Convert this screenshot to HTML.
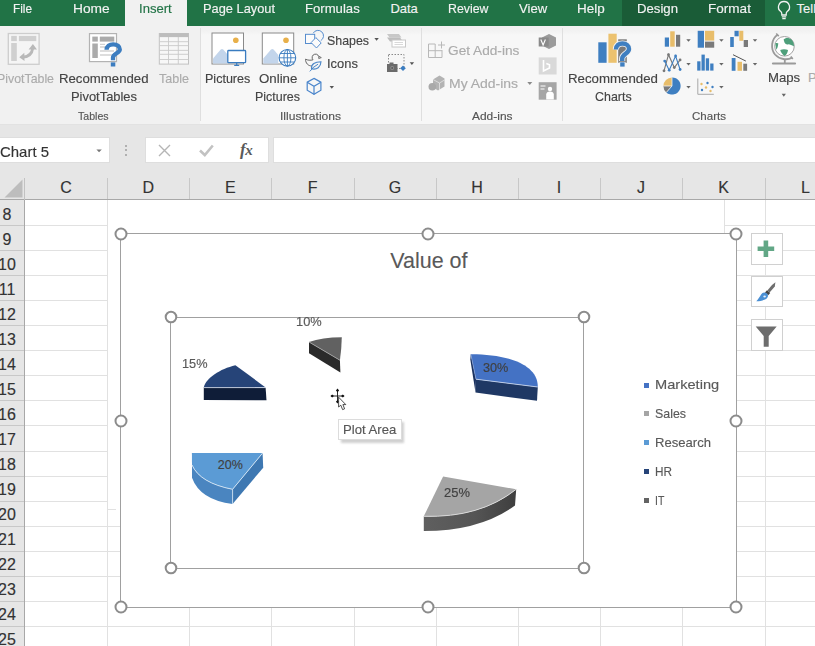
<!DOCTYPE html>
<html><head><meta charset="utf-8"><style>
html,body{margin:0;padding:0;}
body{width:815px;height:646px;overflow:hidden;position:relative;background:#fff;font-family:"Liberation Sans", sans-serif;}
</style></head><body>
<div style="position:absolute;left:0px;top:0px;width:815px;height:25.5px;background:#217346"></div>
<div style="position:absolute;left:622px;top:0px;width:143px;height:25.5px;background:#1a5c37"></div>
<div style="position:absolute;left:125px;top:0px;width:62px;height:26px;background:#f1f1f1"></div>
<svg style="position:absolute;left:774.5px;top:-0.5px" width="18" height="20" viewBox="0 0 18 20"><path d="M9 1.5a5.5 5.5 0 0 0-3.2 10c.7.6 1 1.3 1 2.2v1.3h4.4v-1.3c0-.9.3-1.6 1-2.2A5.5 5.5 0 0 0 9 1.5z" fill="none" stroke="#f2f2f2" stroke-width="1.3"/><path d="M6.8 16.8h4.4M7.3 18.6h3.4" stroke="#f2f2f2" stroke-width="1.2"/></svg>
<div style="position:absolute;left:0px;top:25.5px;width:815px;height:99.5px;background:linear-gradient(#f1f1f1 0px,#f2f2f2 5px,#f7f7f7 9px,#f7f7f7 100%)"></div>
<div style="position:absolute;left:0px;top:25.5px;width:199.5px;height:99.5px;background:#f1f1f1"></div>
<div style="position:absolute;left:0px;top:124px;width:815px;height:1px;background:#e2e2e2"></div>
<div style="position:absolute;left:199.5px;top:27.5px;width:1px;height:93px;background:#dfdfdf"></div>
<div style="position:absolute;left:421px;top:27.5px;width:1px;height:93px;background:#dfdfdf"></div>
<div style="position:absolute;left:562px;top:27.5px;width:1px;height:93px;background:#dfdfdf"></div>
<div style="position:absolute;left:0px;top:125px;width:815px;height:75px;background:#e6e6e6"></div>
<div style="position:absolute;left:-2px;top:137.3px;width:112px;height:26px;background:#fff;border:1px solid #dedede;box-sizing:border-box"></div>
<svg style="position:absolute;left:96px;top:149px" width="7" height="4"><path d="M0.4 0.4h5.4l-2.7 2.8z" fill="#777"/></svg>
<div style="position:absolute;left:125.3px;top:145px;width:2px;height:2px;background:#b0b0b0"></div>
<div style="position:absolute;left:125.3px;top:149.3px;width:2px;height:2px;background:#b0b0b0"></div>
<div style="position:absolute;left:125.3px;top:153.6px;width:2px;height:2px;background:#b0b0b0"></div>
<div style="position:absolute;left:144.5px;top:137.3px;width:124px;height:26px;background:#fff;border:1px solid #dedede;box-sizing:border-box"></div>
<div style="position:absolute;left:273px;top:137.3px;width:545px;height:26px;background:#fff;border:1px solid #dedede;box-sizing:border-box"></div>
<svg style="position:absolute;left:157px;top:143px" width="16" height="16"><path d="M2 2l11 11M13 2L2 13" stroke="#b5b5b5" stroke-width="1.4"/></svg>
<svg style="position:absolute;left:198px;top:142px" width="18" height="16"><path d="M2 8.5l4.8 4.5L14.8 3.5" fill="none" stroke="#c2c2c2" stroke-width="2.6"/></svg>
<div style="position:absolute;left:240px;top:139.5px;font-family:'Liberation Serif',serif;font-style:italic;font-weight:bold;font-size:17px;color:#5a5a5a;line-height:20px;letter-spacing:-0.5px">f<span style="font-size:15px">x</span></div>
<div style="position:absolute;left:0px;top:199px;width:815px;height:1.2px;background:#a8a8a8"></div>
<div style="position:absolute;left:24px;top:178px;width:1px;height:22px;background:#c2c2c2"></div>
<div style="position:absolute;left:107.4px;top:178px;width:1px;height:21px;background:#c8c8c8"></div>
<div style="position:absolute;left:189.3px;top:178px;width:1px;height:21px;background:#c8c8c8"></div>
<div style="position:absolute;left:271.4px;top:178px;width:1px;height:21px;background:#c8c8c8"></div>
<div style="position:absolute;left:353.8px;top:178px;width:1px;height:21px;background:#c8c8c8"></div>
<div style="position:absolute;left:436.0px;top:178px;width:1px;height:21px;background:#c8c8c8"></div>
<div style="position:absolute;left:518.1px;top:178px;width:1px;height:21px;background:#c8c8c8"></div>
<div style="position:absolute;left:600.3px;top:178px;width:1px;height:21px;background:#c8c8c8"></div>
<div style="position:absolute;left:682.4px;top:178px;width:1px;height:21px;background:#c8c8c8"></div>
<div style="position:absolute;left:764.6px;top:178px;width:1px;height:21px;background:#c8c8c8"></div>
<svg style="position:absolute;left:0px;top:176px" width="25" height="24"><path d="M22.5 3.5V21.5H4.5z" fill="#bdbdbd"/></svg>
<div style="position:absolute;left:0px;top:200px;width:24.5px;height:446px;background:#e6e6e6"></div>
<div style="position:absolute;left:24px;top:200px;width:1px;height:446px;background:#a8a8a8"></div>
<div style="position:absolute;left:0px;top:225.05px;width:24px;height:1px;background:#c8c8c8"></div>
<div style="position:absolute;left:0px;top:250.1px;width:24px;height:1px;background:#c8c8c8"></div>
<div style="position:absolute;left:0px;top:275.15px;width:24px;height:1px;background:#c8c8c8"></div>
<div style="position:absolute;left:0px;top:300.2px;width:24px;height:1px;background:#c8c8c8"></div>
<div style="position:absolute;left:0px;top:325.25px;width:24px;height:1px;background:#c8c8c8"></div>
<div style="position:absolute;left:0px;top:350.3px;width:24px;height:1px;background:#c8c8c8"></div>
<div style="position:absolute;left:0px;top:375.35px;width:24px;height:1px;background:#c8c8c8"></div>
<div style="position:absolute;left:0px;top:400.4px;width:24px;height:1px;background:#c8c8c8"></div>
<div style="position:absolute;left:0px;top:425.45000000000005px;width:24px;height:1px;background:#c8c8c8"></div>
<div style="position:absolute;left:0px;top:450.5px;width:24px;height:1px;background:#c8c8c8"></div>
<div style="position:absolute;left:0px;top:475.55px;width:24px;height:1px;background:#c8c8c8"></div>
<div style="position:absolute;left:0px;top:500.6px;width:24px;height:1px;background:#c8c8c8"></div>
<div style="position:absolute;left:0px;top:525.6500000000001px;width:24px;height:1px;background:#c8c8c8"></div>
<div style="position:absolute;left:0px;top:550.7px;width:24px;height:1px;background:#c8c8c8"></div>
<div style="position:absolute;left:0px;top:575.75px;width:24px;height:1px;background:#c8c8c8"></div>
<div style="position:absolute;left:0px;top:600.8px;width:24px;height:1px;background:#c8c8c8"></div>
<div style="position:absolute;left:0px;top:625.85px;width:24px;height:1px;background:#c8c8c8"></div>
<div style="position:absolute;left:25px;top:225.05px;width:82.4px;height:1px;background:#e1e1e1"></div>
<div style="position:absolute;left:25px;top:250.1px;width:82.4px;height:1px;background:#e1e1e1"></div>
<div style="position:absolute;left:25px;top:275.15px;width:82.4px;height:1px;background:#e1e1e1"></div>
<div style="position:absolute;left:25px;top:300.2px;width:82.4px;height:1px;background:#e1e1e1"></div>
<div style="position:absolute;left:25px;top:325.25px;width:82.4px;height:1px;background:#e1e1e1"></div>
<div style="position:absolute;left:25px;top:350.3px;width:82.4px;height:1px;background:#e1e1e1"></div>
<div style="position:absolute;left:25px;top:375.35px;width:82.4px;height:1px;background:#e1e1e1"></div>
<div style="position:absolute;left:25px;top:400.4px;width:82.4px;height:1px;background:#e1e1e1"></div>
<div style="position:absolute;left:25px;top:425.45000000000005px;width:82.4px;height:1px;background:#e1e1e1"></div>
<div style="position:absolute;left:25px;top:450.5px;width:82.4px;height:1px;background:#e1e1e1"></div>
<div style="position:absolute;left:25px;top:475.55px;width:82.4px;height:1px;background:#e1e1e1"></div>
<div style="position:absolute;left:25px;top:500.6px;width:82.4px;height:1px;background:#e1e1e1"></div>
<div style="position:absolute;left:25px;top:525.6500000000001px;width:82.4px;height:1px;background:#e1e1e1"></div>
<div style="position:absolute;left:25px;top:550.7px;width:82.4px;height:1px;background:#e1e1e1"></div>
<div style="position:absolute;left:25px;top:575.75px;width:82.4px;height:1px;background:#e1e1e1"></div>
<div style="position:absolute;left:25px;top:600.8px;width:82.4px;height:1px;background:#e1e1e1"></div>
<div style="position:absolute;left:25px;top:625.85px;width:82.4px;height:1px;background:#e1e1e1"></div>
<div style="position:absolute;left:724px;top:225px;width:91px;height:1px;background:#e1e1e1"></div>
<div style="position:absolute;left:736px;top:250.1px;width:79px;height:1px;background:#e1e1e1"></div>
<div style="position:absolute;left:736px;top:275.15px;width:79px;height:1px;background:#e1e1e1"></div>
<div style="position:absolute;left:736px;top:300.2px;width:79px;height:1px;background:#e1e1e1"></div>
<div style="position:absolute;left:736px;top:325.25px;width:79px;height:1px;background:#e1e1e1"></div>
<div style="position:absolute;left:736px;top:350.3px;width:79px;height:1px;background:#e1e1e1"></div>
<div style="position:absolute;left:736px;top:375.35px;width:79px;height:1px;background:#e1e1e1"></div>
<div style="position:absolute;left:736px;top:400.4px;width:79px;height:1px;background:#e1e1e1"></div>
<div style="position:absolute;left:736px;top:425.45000000000005px;width:79px;height:1px;background:#e1e1e1"></div>
<div style="position:absolute;left:736px;top:450.5px;width:79px;height:1px;background:#e1e1e1"></div>
<div style="position:absolute;left:736px;top:475.55px;width:79px;height:1px;background:#e1e1e1"></div>
<div style="position:absolute;left:736px;top:500.6px;width:79px;height:1px;background:#e1e1e1"></div>
<div style="position:absolute;left:736px;top:525.6500000000001px;width:79px;height:1px;background:#e1e1e1"></div>
<div style="position:absolute;left:736px;top:550.7px;width:79px;height:1px;background:#e1e1e1"></div>
<div style="position:absolute;left:736px;top:575.75px;width:79px;height:1px;background:#e1e1e1"></div>
<div style="position:absolute;left:736px;top:600.8px;width:79px;height:1px;background:#e1e1e1"></div>
<div style="position:absolute;left:25px;top:625.8px;width:790px;height:1px;background:#e1e1e1"></div>
<div style="position:absolute;left:107.4px;top:200px;width:1px;height:446px;background:#e1e1e1"></div>
<div style="position:absolute;left:764.6px;top:200px;width:1px;height:446px;background:#e1e1e1"></div>
<div style="position:absolute;left:724px;top:200px;width:1px;height:33px;background:#e1e1e1"></div>
<div style="position:absolute;left:189.3px;top:607px;width:1px;height:39px;background:#e1e1e1"></div>
<div style="position:absolute;left:271.4px;top:607px;width:1px;height:39px;background:#e1e1e1"></div>
<div style="position:absolute;left:353.8px;top:607px;width:1px;height:39px;background:#e1e1e1"></div>
<div style="position:absolute;left:436.0px;top:607px;width:1px;height:39px;background:#e1e1e1"></div>
<div style="position:absolute;left:518.1px;top:607px;width:1px;height:39px;background:#e1e1e1"></div>
<div style="position:absolute;left:600.3px;top:607px;width:1px;height:39px;background:#e1e1e1"></div>
<div style="position:absolute;left:682.4px;top:607px;width:1px;height:39px;background:#e1e1e1"></div>
<div style="position:absolute;left:108px;top:509px;width:8px;height:1px;background:#e1e1e1"></div>
<div style="position:absolute;left:108px;top:525.6px;width:12px;height:1px;background:#e1e1e1"></div>
<div style="position:absolute;left:108px;top:550.7px;width:12px;height:1px;background:#e1e1e1"></div>
<div style="position:absolute;left:108px;top:575.8px;width:12px;height:1px;background:#e1e1e1"></div>
<div style="position:absolute;left:120.5px;top:233px;width:616px;height:1.1px;background:#a0a0a0"></div>
<div style="position:absolute;left:120.5px;top:606.7px;width:616px;height:1.1px;background:#a0a0a0"></div>
<div style="position:absolute;left:120.1px;top:233px;width:1.1px;height:374px;background:#a0a0a0"></div>
<div style="position:absolute;left:735.8px;top:233px;width:1.1px;height:374px;background:#a0a0a0"></div>
<div style="position:absolute;left:170.7px;top:316.5px;width:413px;height:1.1px;background:#a0a0a0"></div>
<div style="position:absolute;left:170.7px;top:567.8px;width:413px;height:1.1px;background:#a0a0a0"></div>
<div style="position:absolute;left:170.3px;top:317px;width:1.1px;height:251px;background:#a0a0a0"></div>
<div style="position:absolute;left:582.9px;top:317px;width:1.1px;height:251px;background:#a0a0a0"></div>
<svg style="position:absolute;left:112.8px;top:225.5px" width="16" height="16"><circle cx="8" cy="8" r="5.5" fill="#fff" stroke="#8c8c8c" stroke-width="2.0"/></svg>
<svg style="position:absolute;left:420.4px;top:225.5px" width="16" height="16"><circle cx="8" cy="8" r="5.5" fill="#fff" stroke="#8c8c8c" stroke-width="2.0"/></svg>
<svg style="position:absolute;left:728.3px;top:225.5px" width="16" height="16"><circle cx="8" cy="8" r="5.5" fill="#fff" stroke="#8c8c8c" stroke-width="2.0"/></svg>
<svg style="position:absolute;left:112.7px;top:412.6px" width="16" height="16"><circle cx="8" cy="8" r="5.5" fill="#fff" stroke="#8c8c8c" stroke-width="2.0"/></svg>
<svg style="position:absolute;left:728.3px;top:412.6px" width="16" height="16"><circle cx="8" cy="8" r="5.5" fill="#fff" stroke="#8c8c8c" stroke-width="2.0"/></svg>
<svg style="position:absolute;left:112.8px;top:599.2px" width="16" height="16"><circle cx="8" cy="8" r="5.5" fill="#fff" stroke="#8c8c8c" stroke-width="2.0"/></svg>
<svg style="position:absolute;left:420.4px;top:599.2px" width="16" height="16"><circle cx="8" cy="8" r="5.5" fill="#fff" stroke="#8c8c8c" stroke-width="2.0"/></svg>
<svg style="position:absolute;left:728.3px;top:599.2px" width="16" height="16"><circle cx="8" cy="8" r="5.5" fill="#fff" stroke="#8c8c8c" stroke-width="2.0"/></svg>
<svg style="position:absolute;left:162.8px;top:309px" width="16" height="16"><circle cx="8" cy="8" r="5.3" fill="#fff" stroke="#8c8c8c" stroke-width="2.0"/></svg>
<svg style="position:absolute;left:575.5px;top:309px" width="16" height="16"><circle cx="8" cy="8" r="5.3" fill="#fff" stroke="#8c8c8c" stroke-width="2.0"/></svg>
<svg style="position:absolute;left:162.8px;top:560.3px" width="16" height="16"><circle cx="8" cy="8" r="5.3" fill="#fff" stroke="#8c8c8c" stroke-width="2.0"/></svg>
<svg style="position:absolute;left:575.5px;top:560.3px" width="16" height="16"><circle cx="8" cy="8" r="5.3" fill="#fff" stroke="#8c8c8c" stroke-width="2.0"/></svg>
<svg style="position:absolute;left:0;top:0" width="815" height="646">
<defs><linearGradient id="g25" x1="0" y1="0" x2="1" y2="0"><stop offset="0" stop-color="#5f5f5f"/><stop offset="0.55" stop-color="#555"/><stop offset="1" stop-color="#3e3e3e"/></linearGradient></defs>
<!-- 15% HR navy -->
<path d="M203.8 387.3 L203.8 400 L266.5 400.3 L265.6 387.4 Z" fill="#0f1d38"/>
<path d="M203.8 387.3 C206 378 220 369 235.4 365.3 L265.6 387.4 Z" fill="#264478"/>
<path d="M203.8 387.6 L265.6 387.6" stroke="#c9d3e3" stroke-width="0.9"/>
<!-- 10% IT gray -->
<path d="M309 342 L309 353.2 L340.4 372.6 L339.9 360.2 Z" fill="#2a2a2a"/>
<path d="M309 342 Q322 337.4 341.8 337.2 Q341.5 350 339.9 360.2 Z" fill="#616161"/>
<path d="M309 342 L339.9 360.2" stroke="#a8a8a8" stroke-width="0.8"/>
<!-- 30% Marketing -->
<path d="M470.8 354.2 L470.3 359.4 L475.5 392.5 L476 379.2 Z" fill="#1b3260"/>
<path d="M476 379.2 L537.8 387 L537 400.8 L475.5 392.5 Z" fill="#1f3864"/>
<path d="M470.8 354.2 C502 354 538 362 537.8 387 L476 379.2 Z" fill="#4472c4"/>
<path d="M476 379.2 L537.8 387" stroke="#c5d2ea" stroke-width="0.9"/>
<path d="M470.8 354.2 L476 379.2" stroke="#8aa4d6" stroke-width="0.7"/>
<!-- 20% Research -->
<path d="M192 453.1 L192 477.8 Q200 500 232.6 504 L232.6 489.3 Q200 483 192 465 Z" fill="#4a85c0"/>
<path d="M232.6 489.3 L262.6 453.1 L263.2 467.7 L232.6 504 Z" fill="#3e78b2"/>
<path d="M191.9 453.1 L262.6 453.1 L232.6 489.3 Q200 483 192 465 Z" fill="#5b9bd5"/>
<path d="M192 465 Q200 483 232.6 489.3 L262.6 453.1" fill="none" stroke="#d7e6f4" stroke-width="0.9"/>
<path d="M232.6 489.3 L232.6 504" stroke="#d7e6f4" stroke-width="0.8"/>
<!-- 25% Sales -->
<path d="M423.8 516.3 Q480 518 516.2 489.3 L515 505.5 Q480 531 423.8 531.1 Z" fill="url(#g25)"/>
<path d="M443.1 476.5 L516.2 489.3 Q480 518 423.8 516.3 Z" fill="#a5a5a5"/>
<path d="M423.8 516.3 Q480 518 516.2 489.3" fill="none" stroke="#dedede" stroke-width="0.9"/>
</svg>
<div style="position:absolute;left:644px;top:382.5px;width:5px;height:5px;background:#4472c4"></div>
<div style="position:absolute;left:644px;top:410.9px;width:5px;height:5px;background:#a5a5a5"></div>
<div style="position:absolute;left:644px;top:440.2px;width:5px;height:5px;background:#5b9bd5"></div>
<div style="position:absolute;left:644px;top:469.0px;width:5px;height:5px;background:#264478"></div>
<div style="position:absolute;left:644px;top:498.3px;width:5px;height:5px;background:#636363"></div>
<div style="position:absolute;left:750.9px;top:233px;width:32px;height:31.5px;background:#fff;border:1px solid #d0d0d0;box-sizing:border-box"></div>
<div style="position:absolute;left:750.9px;top:275.8px;width:32px;height:31.5px;background:#fff;border:1px solid #d0d0d0;box-sizing:border-box"></div>
<div style="position:absolute;left:750.9px;top:319px;width:32px;height:31.5px;background:#fff;border:1px solid #d0d0d0;box-sizing:border-box"></div>
<svg style="position:absolute;left:750px;top:233px" width="33" height="32"><path d="M15.9 7.5v16.5M7.6 15.7h16.6" stroke="#62a786" stroke-width="4.6"/></svg>
<svg style="position:absolute;left:750px;top:276px" width="33" height="32" viewBox="750 276 33 32"><path d="M775.4 282.3L774.8 286.5 769.6 292.6 767.4 290.6 772 285z" fill="#6e6e6e"/><path d="M767 290.2l3.2 2.8-2 2.2-3.2-2.8z" fill="#454545"/><path d="M764.6 292.6c2.4.3 3.8 2 3.3 3.8-.6 2.6-4.5 4.5-11.6 4.8 2.3-2 3.3-4.5 4.8-6.6 1-1.4 2.2-2.1 3.5-2z" fill="#4a8fd4"/><ellipse cx="764.6" cy="296.6" rx="1.3" ry="1" fill="#e6f0fa"/></svg>
<svg style="position:absolute;left:750px;top:319px" width="33" height="32"><path d="M5.7 7.4h21l-8 9.6v10.8h-5v-10.8z" fill="#6d6d6d"/></svg>
<div style="position:absolute;left:340.5px;top:421.5px;width:63px;height:21px;background:#d0d0d0;filter:blur(1.2px)"></div>
<div style="position:absolute;left:338.2px;top:419px;width:63.4px;height:21.4px;background:#fff;border:1px solid #dcdcdc;box-sizing:border-box"></div>
<svg style="position:absolute;left:326px;top:385px" width="24" height="30" viewBox="326 385 24 30">
<path d="M337.5 390v12.5M331.5 396h12" stroke="#111" stroke-width="0.9"/>
<path d="M337.5 388.6l-1.6 1.8 1.6 1.8 1.6-1.8z M337.5 403.6l-1.6-1.8 1.6-1.8 1.6 1.8z M330.4 396l1.8-1.6 1.8 1.6-1.8 1.6z M344.6 396l-1.8-1.6-1.8 1.6 1.8 1.6z" fill="#111"/>
<path d="M338.6 397.2 L338.6 407 L340.8 405.2 L342.6 409.6 L344.6 408.8 L342.9 404.6 L345.8 404.6 Z" fill="#fff" stroke="#222" stroke-width="0.8" stroke-linejoin="round"/>
</svg>
<svg style="position:absolute;left:0;top:25px" width="815" height="100" viewBox="0 25 815 100">
<!-- PivotTable disabled -->
<rect x="8.3" y="33.5" width="30.8" height="30.8" fill="#f5f5f5" stroke="#cdcdcd" stroke-width="1.3"/>
<rect x="11.2" y="35.9" width="5.6" height="5.2" fill="#d0d0d0"/>
<rect x="18.9" y="35.9" width="17.4" height="5.2" fill="#d0d0d0"/>
<rect x="11.2" y="43" width="5.6" height="18" fill="#d0d0d0"/>
<path d="M23 57.2 C28 56.8 32 54 32.8 48" fill="none" stroke="#b9b9b9" stroke-width="2.8"/>
<path d="M28.6 49.5l4.3-5.5 4.1 5.6z M24.3 52.8l-5 4.4 5.2 3.9z" fill="#b9b9b9"/>
<!-- Recommended PivotTables -->
<rect x="89.5" y="33.6" width="27" height="28" fill="#fff" stroke="#b3b3b3" stroke-width="1.2"/>
<rect x="92.3" y="36.6" width="5.5" height="5" fill="#ababab"/>
<rect x="99.8" y="36.6" width="14.5" height="5" fill="#ababab"/>
<rect x="92.3" y="43.5" width="5.5" height="14.5" fill="#ababab"/>
<path d="M100 44.4h5M100 47h5M100 51h14M100 55h13" stroke="#d2d2d2" stroke-width="1.3"/>
<path d="M106.6 49.8C106.6 46 109.5 44.3 113.2 44.3C117 44.3 119.8 46.5 119.8 49.5C119.8 53 113 53.5 113 57.5V60.3" fill="none" stroke="#3c7dc0" stroke-width="4.3"/>
<rect x="110.8" y="62.4" width="4.5" height="4.1" fill="#3c7dc0"/>
<!-- Table disabled -->
<rect x="159.3" y="33.5" width="29.2" height="30.6" fill="#f7f7f7" stroke="#c2c2c2" stroke-width="1"/>
<rect x="159.3" y="33.3" width="29.2" height="3.8" fill="#bdbdbd"/>
<path d="M168.5 37v27M178.3 37v27M159.3 41.7h29.2M159.3 45.6h29.2M159.3 50.4h29.2M159.3 54.3h29.2M159.3 59.5h29.2" stroke="#cacaca" stroke-width="0.9"/>
<!-- Pictures -->
<rect x="212" y="33" width="31.5" height="31" fill="#fff" stroke="#8a8a8a" stroke-width="1"/>
<circle cx="235.8" cy="40.3" r="2.8" fill="#e8b04a"/>
<path d="M213 63.5V58.5l7.5-8.8c1-1 2-1 3 0l4.5 5.3v8.5z" fill="#c3d5eb"/>
<rect x="227.8" y="50.5" width="17.8" height="12.2" rx="0.8" fill="#fff" stroke="#3a7cc0" stroke-width="1.3"/>
<path d="M236.7 62.7v2M234.2 65.3h5" stroke="#3a7cc0" stroke-width="1.2"/>
<!-- Online Pictures -->
<rect x="262.3" y="33" width="31.4" height="31" fill="#fff" stroke="#8a8a8a" stroke-width="1"/>
<circle cx="286" cy="40.3" r="2.8" fill="#e8b04a"/>
<path d="M263.3 63.5V58.5l7.5-8.8c1-1 2-1 3 0l4.5 5.3v8.5z" fill="#c3d5eb"/>
<circle cx="287.4" cy="57.8" r="8.3" fill="#fff" stroke="#3a7cc0" stroke-width="1.1"/>
<ellipse cx="287.4" cy="57.8" rx="3.5" ry="8.3" fill="none" stroke="#3a7cc0" stroke-width="0.9"/>
<path d="M279.1 57.8h16.6M280.5 53.5h13.8M280.5 62h13.8M287.4 49.5v16.6" stroke="#3a7cc0" stroke-width="0.9"/>
<!-- Shapes -->
<rect x="305.5" y="34.3" width="9.2" height="9.2" fill="#fbfbfb" stroke="#4f88cc" stroke-width="0.95"/>
<path d="M313.2 33.2A5.5 5.5 0 1 1 320.8 40.6" fill="none" stroke="#4f88cc" stroke-width="0.95"/>
<path d="M315.8 37.6l5.4 5.3-4.7 5.1-5.4-5.4z" fill="#fbfbfb" stroke="#4f88cc" stroke-width="0.95"/>
<path d="M374.4 38h4.4l-2.2 2.8z" fill="#555"/>
<!-- Icons -->
<path d="M305.5 59.2C307.5 60.2 310.5 60.6 313 59.8" fill="none" stroke="#666" stroke-width="1"/>
<path d="M313 59.8A3.4 3.4 0 1 1 318.8 58.4" fill="none" stroke="#666" stroke-width="1"/>
<path d="M318.8 56.2L321.3 57.6L318.6 58.6" fill="none" stroke="#666" stroke-width="0.9"/>
<path d="M305.5 59.2C305.5 63 308 66 312 66" fill="none" stroke="#666" stroke-width="1"/>
<path d="M311.5 68.8C311 64 315 62 321 61.8C320.8 67 317 70 311.5 68.8Z" fill="#f3f3f3" stroke="#4a86c8" stroke-width="1.1"/>
<path d="M309.8 71.4L313 68M312.5 68L318 64.2" fill="none" stroke="#4a86c8" stroke-width="1"/>
<!-- 3D models -->
<path d="M314 78.4l6.9 3.8v8l-6.9 4-6.8-4v-8z" fill="none" stroke="#4a85cb" stroke-width="1.2"/>
<path d="M307.2 82.2l6.8 4 6.9-4M314 86.2v8.2" fill="none" stroke="#4a85cb" stroke-width="1.2"/>
<path d="M329.6 86h4.4l-2.2 2.8z" fill="#555"/>
<!-- Screenshot disabled -->
<path d="M387 34h12l2.5 3.5h-12z" fill="#c8c8c8"/>
<path d="M387 37.5h13l3 4h-13z" fill="#bdbdbd"/>
<rect x="392" y="40" width="13.5" height="7" fill="#fff" stroke="#c8c8c8" stroke-width="1"/>
<path d="M394.5 42.5h8.5M394.5 44.5h8.5" stroke="#cfcfcf" stroke-width="0.8"/>
<!-- Screen clipping -->
<rect x="388.5" y="54.5" width="15.5" height="14" fill="none" stroke="#8a8a8a" stroke-width="1" stroke-dasharray="1.5 1.5"/>
<rect x="387" y="64" width="10.5" height="8" fill="#6b6b6b"/>
<rect x="389.5" y="62.5" width="4" height="2" fill="#6b6b6b"/>
<circle cx="392.2" cy="68" r="2" fill="#8f8f8f"/><circle cx="392.2" cy="68" r="1" fill="#5a5a5a"/>
<path d="M403 65.5l2.8 2.8-2.8 2.8-2.8-2.8z" fill="#3a7cc0"/>
<path d="M409.7 62.3h4.4l-2.2 2.8z" fill="#555"/>
<!-- Get Add-ins -->
<path d="M428.5 44v13.5h13.5V50M428.5 50.7h13.5M435.2 44v13.5M428.5 44h6.7" fill="none" stroke="#b8b8b8" stroke-width="1"/>
<path d="M441.5 41.5v7M438 45h7" stroke="#b8b8b8" stroke-width="1"/>
<!-- My Add-ins -->
<path d="M433 79.5l6.5-4 5 3v8l-6.5 4-5-3z" fill="#b3b3b3"/>
<path d="M433 79.5l6.5 3.5 5-3M439.5 83v7.5" stroke="#f3f3f3" stroke-width="0.6" fill="none"/>
<circle cx="432.3" cy="86.8" r="3.8" fill="#a9a9a9"/>
<path d="M527.3 82h5l-2.5 3z" fill="#8a8a8a"/>
<!-- Visio -->
<path d="M542 37.5l7-3.5 7 3.5v8l-7 3.5-7-3.5z" fill="#9b9b9b"/>
<rect x="538.7" y="37.5" width="10" height="9" fill="#8a8a8a"/>
<path d="M540.8 39.5l2.3 5.5 2.3-5.5" fill="none" stroke="#fff" stroke-width="1.1"/>
<!-- Bing -->
<rect x="538.7" y="57.4" width="17.9" height="17.1" fill="#d9d9d9"/>
<path d="M543.5 60v11l6-3v-3.2l-3.2-1.2" fill="none" stroke="#fff" stroke-width="1.6"/>
<!-- People graph -->
<rect x="538.7" y="82.2" width="17.9" height="17.5" fill="#a6a6a6"/>
<circle cx="550" cy="89" r="2.2" fill="#fff"/>
<path d="M546.2 99.5v-5c0-2 1.6-3 3.8-3 2.2 0 3.8 1 3.8 3v5z" fill="#fff"/>
<path d="M540.5 86h5M540.5 89h4" stroke="#fff" stroke-width="1"/>
<!-- Recommended Charts -->
<rect x="598.3" y="42.3" width="8.3" height="20.5" fill="#3f7fc1"/>
<rect x="608.4" y="33.7" width="8.3" height="29.1" fill="#ecc26f"/>
<rect x="618.2" y="39.3" width="8.6" height="23.5" fill="#7a7a7a"/>
<path d="M615.9 49.5C615.9 45.2 619 43.5 622.4 43.5C626.5 43.5 629 46 629 49C629 53.5 622.2 54 622.2 58.5V61" fill="none" stroke="#f3f3f3" stroke-width="6.2"/>
<path d="M615.9 49.5C615.9 45.2 619 43.5 622.4 43.5C626.5 43.5 629 46 629 49C629 53.5 622.2 54 622.2 58.5V61" fill="none" stroke="#3f7fc1" stroke-width="4.4"/>
<rect x="619.5" y="61.8" width="6" height="5.5" fill="#f3f3f3"/>
<rect x="620.2" y="62.3" width="4.4" height="4.3" fill="#3f7fc1"/>
<!-- column chart small -->
<rect x="664.8" y="37.5" width="4.2" height="9.2" fill="#3f7fc1"/>
<rect x="670.2" y="31.3" width="4.5" height="15.4" fill="#e8bd6a"/>
<rect x="676" y="34.8" width="4.2" height="11.9" fill="#7a7a7a"/>
<path d="M686.3 39.3h4.4l-2.2 2.5z" fill="#666"/>
<!-- treemap -->
<rect x="697.7" y="30.8" width="6.3" height="16.9" fill="#3f7fc1"/>
<rect x="705" y="30.8" width="9.2" height="9.8" fill="#e8bd6a"/>
<rect x="705" y="41.6" width="9.2" height="6.1" fill="#7a7a7a"/>
<path d="M719.2 39.3h4.4l-2.2 2.5z" fill="#666"/>
<!-- waterfall -->
<rect x="730.2" y="37" width="3.6" height="10" fill="#3f7fc1"/>
<rect x="734.5" y="30.8" width="4.2" height="5.5" fill="#3f7fc1"/>
<rect x="739.3" y="30.8" width="4" height="10" fill="#e8bd6a"/>
<rect x="743.7" y="40" width="4.3" height="7" fill="#7a7a7a"/>
<path d="M752.8 39.3h4.4l-2.2 2.5z" fill="#666"/>
<!-- line chart -->
<path d="M664 70.8L668.5 54.7L674.3 67.6L680.1 59.9" fill="none" stroke="#777" stroke-width="1.1"/>
<path d="M664.7 61.1L669.2 70.2L675.6 56L680.1 69.5" fill="none" stroke="#3f7fc1" stroke-width="1.1"/>
<circle cx="664" cy="70.8" r="1.4" fill="#777"/><circle cx="668.5" cy="54.7" r="1.4" fill="#777"/><circle cx="674.3" cy="67.6" r="1.4" fill="#777"/><circle cx="680.1" cy="59.9" r="1.4" fill="#777"/>
<circle cx="664.7" cy="61.1" r="1.4" fill="#3f7fc1"/><circle cx="669.2" cy="70.2" r="1.4" fill="#3f7fc1"/><circle cx="675.6" cy="56" r="1.4" fill="#3f7fc1"/><circle cx="680.1" cy="69.5" r="1.4" fill="#3f7fc1"/>
<path d="M686.3 63h4.4l-2.2 2.5z" fill="#666"/>
<!-- histogram -->
<rect x="697.2" y="61.3" width="3.3" height="9.3" fill="#3f7fc1"/>
<rect x="701.5" y="54.6" width="3.3" height="16" fill="#3f7fc1"/>
<rect x="705.8" y="58.3" width="3.3" height="12.3" fill="#3f7fc1"/>
<rect x="710.2" y="63.5" width="3.3" height="7.1" fill="#3f7fc1"/>
<path d="M719.2 63h4.4l-2.2 2.5z" fill="#666"/>
<!-- combo -->
<rect x="731.7" y="58" width="3.8" height="12.8" fill="#3f7fc1"/>
<rect x="737.5" y="61.8" width="4.5" height="9" fill="#e8bd6a"/>
<rect x="743.3" y="63.7" width="3.8" height="7.1" fill="#7a7a7a"/>
<path d="M733 54.7L745.9 61.1" stroke="#555" stroke-width="1"/>
<path d="M752.8 63h4.4l-2.2 2.5z" fill="#666"/>
<!-- pie -->
<path d="M672 86 L672 77.4 A8.6 8.6 0 1 1 666.3 92.4 Z" fill="#3f7fc1"/>
<path d="M672 86 L663.4 86 A8.6 8.6 0 0 1 672 77.4 Z" fill="#e8bd6a"/>
<path d="M672 86 L666.3 92.4 A8.6 8.6 0 0 1 663.4 86 Z" fill="#7a7a7a"/>
<path d="M672 86 L663.4 86 M672 86 L672 77.4 M672 86 L666.3 92.4" stroke="#f3f3f3" stroke-width="0.8"/>
<path d="M686.3 86h4.4l-2.2 2.5z" fill="#666"/>
<!-- scatter -->
<path d="M697.8 78.5v15.8h16" fill="none" stroke="#a9a9a9" stroke-width="1"/>
<circle cx="701.5" cy="84" r="1.2" fill="#e8bd6a"/><circle cx="706" cy="87.5" r="1.2" fill="#e8bd6a"/><circle cx="710.5" cy="91" r="1.2" fill="#e8bd6a"/>
<circle cx="702" cy="90" r="1.2" fill="#3f7fc1"/><circle cx="707.5" cy="83" r="1.2" fill="#3f7fc1"/><circle cx="712.5" cy="87" r="1.2" fill="#3f7fc1"/>
<path d="M719.2 86h4.4l-2.2 2.5z" fill="#666"/>
<!-- maps globe -->
<circle cx="784.5" cy="46.3" r="9.8" fill="#fff" stroke="#a3a3a3" stroke-width="1"/>
<path d="M783.6 39.5C785 37.5 789 37.3 791.5 39.5C793.5 41.5 794.3 44.5 793.8 46.6C792 45 790 44.8 788.5 44.3C786.5 45 785.5 44 784.5 42.5z M775.5 43C776.5 42.8 778 42.9 778.3 43.5C778 46 777.5 48 776.5 49.7C775.8 47.5 775.4 45 775.5 43z M780.2 50C782.5 48.8 786 49 788 50C787.8 52.5 786.5 55 784.5 55.9C782.5 54.5 780.8 52.5 780.2 50z" fill="#4f9f7b"/>
<path d="M777.8 34.8C771 39 770.5 49 775 54.5C779.5 59.5 787 60.5 792.2 57.6" fill="none" stroke="#9a9a9a" stroke-width="1.8"/>
<path d="M776.2 33.5l2.6 2.6M790.8 56.5l2 2.6" stroke="#9a9a9a" stroke-width="1.6"/>
<path d="M784.8 59v4" stroke="#9a9a9a" stroke-width="1.8"/>
<path d="M773 63.5h22" stroke="#9a9a9a" stroke-width="2.2" stroke-linecap="round"/>
<path d="M781.7 93.7h4.2l-2.1 3z" fill="#666"/>
</svg>
<div id="t0" style="position:absolute;left:12.8px;top:1.80px;transform:scaleX(0.9116);transform-origin:0 0;font-size:13px;line-height:13px;color:#f2f2f2;white-space:nowrap;-webkit-text-stroke:0.15px #f2f2f2">File</div>
<div id="t1" style="position:absolute;left:72.6px;top:1.80px;transform:scaleX(1.0580);transform-origin:0 0;font-size:13px;line-height:13px;color:#f2f2f2;white-space:nowrap;-webkit-text-stroke:0.15px #f2f2f2">Home</div>
<div id="t2" style="position:absolute;left:139.1px;top:1.80px;transform:scaleX(1.0057);transform-origin:0 0;font-size:13px;line-height:13px;color:#217346;white-space:nowrap;-webkit-text-stroke:0.15px #217346">Insert</div>
<div id="t3" style="position:absolute;left:202.7px;top:1.80px;transform:scaleX(0.9861);transform-origin:0 0;font-size:13px;line-height:13px;color:#f2f2f2;white-space:nowrap;-webkit-text-stroke:0.15px #f2f2f2">Page Layout</div>
<div id="t4" style="position:absolute;left:305.2px;top:1.80px;transform:scaleX(1.0095);transform-origin:0 0;font-size:13px;line-height:13px;color:#f2f2f2;white-space:nowrap;-webkit-text-stroke:0.15px #f2f2f2">Formulas</div>
<div id="t5" style="position:absolute;left:390.4px;top:1.80px;font-size:13px;line-height:13px;color:#f2f2f2;white-space:nowrap;-webkit-text-stroke:0.15px #f2f2f2">Data</div>
<div id="t6" style="position:absolute;left:448.1px;top:1.80px;transform:scaleX(0.9478);transform-origin:0 0;font-size:13px;line-height:13px;color:#f2f2f2;white-space:nowrap;-webkit-text-stroke:0.15px #f2f2f2">Review</div>
<div id="t7" style="position:absolute;left:518.7px;top:1.80px;transform:scaleX(1.0088);transform-origin:0 0;font-size:13px;line-height:13px;color:#f2f2f2;white-space:nowrap;-webkit-text-stroke:0.15px #f2f2f2">View</div>
<div id="t8" style="position:absolute;left:576.5px;top:1.80px;transform:scaleX(1.0355);transform-origin:0 0;font-size:13px;line-height:13px;color:#f2f2f2;white-space:nowrap;-webkit-text-stroke:0.15px #f2f2f2">Help</div>
<div id="t9" style="position:absolute;left:636.6px;top:1.80px;transform:scaleX(1.0131);transform-origin:0 0;font-size:13px;line-height:13px;color:#f2f2f2;white-space:nowrap;-webkit-text-stroke:0.15px #f2f2f2">Design</div>
<div id="t10" style="position:absolute;left:707.8px;top:1.80px;transform:scaleX(1.0420);transform-origin:0 0;font-size:13px;line-height:13px;color:#f2f2f2;white-space:nowrap;-webkit-text-stroke:0.15px #f2f2f2">Format</div>
<div id="t11" style="position:absolute;left:796.6px;top:1.80px;font-size:13px;line-height:13px;color:#f2f2f2;white-space:nowrap;-webkit-text-stroke:0.15px #f2f2f2">Tell</div>
<div id="t12" style="position:absolute;left:-3px;top:71.70px;transform:scaleX(0.9502);transform-origin:0 0;font-size:13px;line-height:13px;color:#ababab;white-space:nowrap;-webkit-text-stroke:0.15px #ababab">PivotTable</div>
<div id="t13" style="position:absolute;left:59px;top:71.70px;transform:scaleX(1.0152);transform-origin:0 0;font-size:13px;line-height:13px;color:#444444;white-space:nowrap;-webkit-text-stroke:0.15px #444444">Recommended</div>
<div id="t14" style="position:absolute;left:70.7px;top:89.80px;transform:scaleX(0.9927);transform-origin:0 0;font-size:13px;line-height:13px;color:#444444;white-space:nowrap;-webkit-text-stroke:0.15px #444444">PivotTables</div>
<div id="t15" style="position:absolute;left:159px;top:71.70px;transform:scaleX(0.9653);transform-origin:0 0;font-size:13px;line-height:13px;color:#ababab;white-space:nowrap;-webkit-text-stroke:0.15px #ababab">Table</div>
<div id="t16" style="position:absolute;left:78.4px;top:110.77px;transform:scaleX(0.9203);transform-origin:0 0;font-size:11.5px;line-height:11.5px;color:#555;white-space:nowrap;-webkit-text-stroke:0.15px #555">Tables</div>
<div id="t17" style="position:absolute;left:204.7px;top:71.70px;transform:scaleX(0.9645);transform-origin:0 0;font-size:13px;line-height:13px;color:#444444;white-space:nowrap;-webkit-text-stroke:0.15px #444444">Pictures</div>
<div id="t18" style="position:absolute;left:258.6px;top:71.70px;transform:scaleX(1.0219);transform-origin:0 0;font-size:13px;line-height:13px;color:#444444;white-space:nowrap;-webkit-text-stroke:0.15px #444444">Online</div>
<div id="t19" style="position:absolute;left:255px;top:89.80px;transform:scaleX(0.9581);transform-origin:0 0;font-size:13px;line-height:13px;color:#444444;white-space:nowrap;-webkit-text-stroke:0.15px #444444">Pictures</div>
<div id="t20" style="position:absolute;left:326.5px;top:33.70px;transform:scaleX(0.9525);transform-origin:0 0;font-size:13px;line-height:13px;color:#444444;white-space:nowrap;-webkit-text-stroke:0.15px #444444">Shapes</div>
<div id="t21" style="position:absolute;left:326.5px;top:57.20px;transform:scaleX(0.9943);transform-origin:0 0;font-size:13px;line-height:13px;color:#444444;white-space:nowrap;-webkit-text-stroke:0.15px #444444">Icons</div>
<div id="t22" style="position:absolute;left:279.7px;top:110.77px;transform:scaleX(1.0503);transform-origin:0 0;font-size:11.5px;line-height:11.5px;color:#555;white-space:nowrap;-webkit-text-stroke:0.15px #555">Illustrations</div>
<div id="t23" style="position:absolute;left:448px;top:43.60px;transform:scaleX(1.0510);transform-origin:0 0;font-size:13px;line-height:13px;color:#ababab;white-space:nowrap;-webkit-text-stroke:0.15px #ababab">Get Add-ins</div>
<div id="t24" style="position:absolute;left:448.5px;top:76.70px;transform:scaleX(1.0744);transform-origin:0 0;font-size:13px;line-height:13px;color:#ababab;white-space:nowrap;-webkit-text-stroke:0.15px #ababab">My Add-ins</div>
<div id="t25" style="position:absolute;left:471.5px;top:110.77px;transform:scaleX(1.0385);transform-origin:0 0;font-size:11.5px;line-height:11.5px;color:#555;white-space:nowrap;-webkit-text-stroke:0.15px #555">Add-ins</div>
<div id="t26" style="position:absolute;left:567.5px;top:71.70px;transform:scaleX(1.0209);transform-origin:0 0;font-size:13px;line-height:13px;color:#444444;white-space:nowrap;-webkit-text-stroke:0.15px #444444">Recommended</div>
<div id="t27" style="position:absolute;left:595px;top:89.80px;transform:scaleX(0.9557);transform-origin:0 0;font-size:13px;line-height:13px;color:#444444;white-space:nowrap;-webkit-text-stroke:0.15px #444444">Charts</div>
<div id="t28" style="position:absolute;left:767.5px;top:71.20px;transform:scaleX(1.0127);transform-origin:0 0;font-size:13px;line-height:13px;color:#444444;white-space:nowrap;-webkit-text-stroke:0.15px #444444">Maps</div>
<div id="t29" style="position:absolute;left:808px;top:71.20px;font-size:13px;line-height:13px;color:#ababab;white-space:nowrap;-webkit-text-stroke:0.15px #ababab">P</div>
<div id="t30" style="position:absolute;left:692px;top:110.77px;transform:scaleX(1.0037);transform-origin:0 0;font-size:11.5px;line-height:11.5px;color:#555;white-space:nowrap;-webkit-text-stroke:0.15px #555">Charts</div>
<div id="t31" style="position:absolute;left:0px;top:143.90px;transform:scaleX(0.9959);transform-origin:0 0;font-size:15px;line-height:15px;color:#333;white-space:nowrap;-webkit-text-stroke:0.15px #333">Chart 5</div>
<div id="t32" style="position:absolute;left:66px;top:180.36px;transform:translateX(-50%);font-size:16px;line-height:16px;color:#333;white-space:nowrap;-webkit-text-stroke:0.15px #333">C</div>
<div id="t33" style="position:absolute;left:148.4px;top:180.36px;transform:translateX(-50%);font-size:16px;line-height:16px;color:#333;white-space:nowrap;-webkit-text-stroke:0.15px #333">D</div>
<div id="t34" style="position:absolute;left:230.4px;top:180.36px;transform:translateX(-50%);font-size:16px;line-height:16px;color:#333;white-space:nowrap;-webkit-text-stroke:0.15px #333">E</div>
<div id="t35" style="position:absolute;left:312.6px;top:180.36px;transform:translateX(-50%);font-size:16px;line-height:16px;color:#333;white-space:nowrap;-webkit-text-stroke:0.15px #333">F</div>
<div id="t36" style="position:absolute;left:395px;top:180.36px;transform:translateX(-50%);font-size:16px;line-height:16px;color:#333;white-space:nowrap;-webkit-text-stroke:0.15px #333">G</div>
<div id="t37" style="position:absolute;left:477px;top:180.36px;transform:translateX(-50%);font-size:16px;line-height:16px;color:#333;white-space:nowrap;-webkit-text-stroke:0.15px #333">H</div>
<div id="t38" style="position:absolute;left:559px;top:180.36px;transform:translateX(-50%);font-size:16px;line-height:16px;color:#333;white-space:nowrap;-webkit-text-stroke:0.15px #333">I</div>
<div id="t39" style="position:absolute;left:641px;top:180.36px;transform:translateX(-50%);font-size:16px;line-height:16px;color:#333;white-space:nowrap;-webkit-text-stroke:0.15px #333">J</div>
<div id="t40" style="position:absolute;left:723.5px;top:180.36px;transform:translateX(-50%);font-size:16px;line-height:16px;color:#333;white-space:nowrap;-webkit-text-stroke:0.15px #333">K</div>
<div id="t41" style="position:absolute;left:805.5px;top:180.36px;transform:translateX(-50%);font-size:16px;line-height:16px;color:#333;white-space:nowrap;-webkit-text-stroke:0.15px #333">L</div>
<div id="t42" style="position:absolute;left:7px;top:206.56px;transform:translateX(-50%);font-size:16px;line-height:16px;color:#333;white-space:nowrap;-webkit-text-stroke:0.15px #333">8</div>
<div id="t43" style="position:absolute;left:7px;top:231.61px;transform:translateX(-50%);font-size:16px;line-height:16px;color:#333;white-space:nowrap;-webkit-text-stroke:0.15px #333">9</div>
<div id="t44" style="position:absolute;left:7px;top:256.66px;transform:translateX(-50%);font-size:16px;line-height:16px;color:#333;white-space:nowrap;-webkit-text-stroke:0.15px #333">10</div>
<div id="t45" style="position:absolute;left:7px;top:281.71px;transform:translateX(-50%);font-size:16px;line-height:16px;color:#333;white-space:nowrap;-webkit-text-stroke:0.15px #333">11</div>
<div id="t46" style="position:absolute;left:7px;top:306.76px;transform:translateX(-50%);font-size:16px;line-height:16px;color:#333;white-space:nowrap;-webkit-text-stroke:0.15px #333">12</div>
<div id="t47" style="position:absolute;left:7px;top:331.81px;transform:translateX(-50%);font-size:16px;line-height:16px;color:#333;white-space:nowrap;-webkit-text-stroke:0.15px #333">13</div>
<div id="t48" style="position:absolute;left:7px;top:356.86px;transform:translateX(-50%);font-size:16px;line-height:16px;color:#333;white-space:nowrap;-webkit-text-stroke:0.15px #333">14</div>
<div id="t49" style="position:absolute;left:7px;top:381.91px;transform:translateX(-50%);font-size:16px;line-height:16px;color:#333;white-space:nowrap;-webkit-text-stroke:0.15px #333">15</div>
<div id="t50" style="position:absolute;left:7px;top:406.96px;transform:translateX(-50%);font-size:16px;line-height:16px;color:#333;white-space:nowrap;-webkit-text-stroke:0.15px #333">16</div>
<div id="t51" style="position:absolute;left:7px;top:432.01px;transform:translateX(-50%);font-size:16px;line-height:16px;color:#333;white-space:nowrap;-webkit-text-stroke:0.15px #333">17</div>
<div id="t52" style="position:absolute;left:7px;top:457.06px;transform:translateX(-50%);font-size:16px;line-height:16px;color:#333;white-space:nowrap;-webkit-text-stroke:0.15px #333">18</div>
<div id="t53" style="position:absolute;left:7px;top:482.11px;transform:translateX(-50%);font-size:16px;line-height:16px;color:#333;white-space:nowrap;-webkit-text-stroke:0.15px #333">19</div>
<div id="t54" style="position:absolute;left:7px;top:507.16px;transform:translateX(-50%);font-size:16px;line-height:16px;color:#333;white-space:nowrap;-webkit-text-stroke:0.15px #333">20</div>
<div id="t55" style="position:absolute;left:7px;top:532.21px;transform:translateX(-50%);font-size:16px;line-height:16px;color:#333;white-space:nowrap;-webkit-text-stroke:0.15px #333">21</div>
<div id="t56" style="position:absolute;left:7px;top:557.26px;transform:translateX(-50%);font-size:16px;line-height:16px;color:#333;white-space:nowrap;-webkit-text-stroke:0.15px #333">22</div>
<div id="t57" style="position:absolute;left:7px;top:582.31px;transform:translateX(-50%);font-size:16px;line-height:16px;color:#333;white-space:nowrap;-webkit-text-stroke:0.15px #333">23</div>
<div id="t58" style="position:absolute;left:7px;top:607.36px;transform:translateX(-50%);font-size:16px;line-height:16px;color:#333;white-space:nowrap;-webkit-text-stroke:0.15px #333">24</div>
<div id="t59" style="position:absolute;left:7px;top:632.41px;transform:translateX(-50%);font-size:16px;line-height:16px;color:#333;white-space:nowrap;-webkit-text-stroke:0.15px #333">25</div>
<div id="t60" style="position:absolute;left:428.9px;top:251.00px;transform:translateX(-50%);font-size:21.5px;line-height:21.5px;color:#595959;white-space:nowrap;-webkit-text-stroke:0.1px #595959">Value of</div>
<div id="t61" style="position:absolute;left:296.3px;top:316.42px;transform:scaleX(1.0267);transform-origin:0 0;font-size:12.5px;line-height:12.5px;color:#595959;white-space:nowrap;-webkit-text-stroke:0.15px #595959">10%</div>
<div id="t62" style="position:absolute;left:181.5px;top:358.22px;transform:scaleX(1.0187);transform-origin:0 0;font-size:12.5px;line-height:12.5px;color:#595959;white-space:nowrap;-webkit-text-stroke:0.15px #595959">15%</div>
<div id="t63" style="position:absolute;left:483.2px;top:362.02px;transform:scaleX(1.0147);transform-origin:0 0;font-size:12.5px;line-height:12.5px;color:#404040;white-space:nowrap;-webkit-text-stroke:0.15px #404040">30%</div>
<div id="t64" style="position:absolute;left:217.8px;top:458.62px;font-size:12.5px;line-height:12.5px;color:#404040;white-space:nowrap;-webkit-text-stroke:0.15px #404040">20%</div>
<div id="t65" style="position:absolute;left:444.4px;top:486.72px;transform:scaleX(1.0347);transform-origin:0 0;font-size:12.5px;line-height:12.5px;color:#404040;white-space:nowrap;-webkit-text-stroke:0.15px #404040">25%</div>
<div id="t66" style="position:absolute;left:655px;top:378.07px;transform:scaleX(1.0830);transform-origin:0 0;font-size:13.5px;line-height:13.5px;color:#595959;white-space:nowrap;-webkit-text-stroke:0.15px #595959">Marketing</div>
<div id="t67" style="position:absolute;left:655px;top:406.77px;transform:scaleX(0.9177);transform-origin:0 0;font-size:13.5px;line-height:13.5px;color:#595959;white-space:nowrap;-webkit-text-stroke:0.15px #595959">Sales</div>
<div id="t68" style="position:absolute;left:655px;top:435.87px;transform:scaleX(0.9692);transform-origin:0 0;font-size:13.5px;line-height:13.5px;color:#595959;white-space:nowrap;-webkit-text-stroke:0.15px #595959">Research</div>
<div id="t69" style="position:absolute;left:655px;top:464.67px;transform:scaleX(0.8718);transform-origin:0 0;font-size:13.5px;line-height:13.5px;color:#595959;white-space:nowrap;-webkit-text-stroke:0.15px #595959">HR</div>
<div id="t70" style="position:absolute;left:655px;top:493.97px;transform:scaleX(0.7750);transform-origin:0 0;font-size:13.5px;line-height:13.5px;color:#595959;white-space:nowrap;-webkit-text-stroke:0.15px #595959">IT</div>
<div id="t71" style="position:absolute;left:342.7px;top:423.20px;transform:scaleX(1.0101);transform-origin:0 0;font-size:13px;line-height:13px;color:#575757;white-space:nowrap;-webkit-text-stroke:0.15px #575757">Plot Area</div>
</body></html>
